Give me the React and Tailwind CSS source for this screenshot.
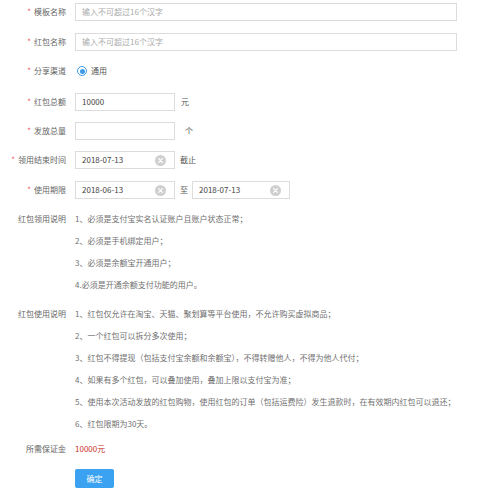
import React from "react";

const font = { fontFamily: '"Noto Sans CJK SC", "Noto Sans", sans-serif' };

function Label({ text, required }) {
  return (
    <div className="w-[66px] shrink-0 flex justify-end items-center text-[8px] text-[#666] whitespace-nowrap">
      {required && <span className="text-[#f05a5a] mr-[3px] text-[8px]">*</span>}
      {text}
    </div>
  );
}

function ClearIcon() {
  return (
    <svg width="11" height="11" viewBox="0 0 12 12" className="shrink-0">
      <circle cx="6" cy="6" r="6" fill="#cfcfcf" />
      <path d="M4 4 L8 8 M8 4 L4 8" stroke="#fff" strokeWidth="1.3" strokeLinecap="round" />
    </svg>
  );
}

function Box({ w, value, placeholder, clear }) {
  return (
    <div
      className={`${w} h-[18px] border border-[#dcdcdc] bg-white flex items-center justify-between pl-[6px] pr-[8px] text-[8px]`}
    >
      {value ? (
        <span className="text-[#444]">{value}</span>
      ) : (
        <span className="text-[#aaa]">{placeholder}</span>
      )}
      {clear && <ClearIcon />}
    </div>
  );
}

function Row({ label, required, className, children }) {
  return (
    <div className={`flex items-center ${className}`}>
      <Label text={label} required={required} />
      <div className="ml-[9px] flex items-center text-[8px] text-[#555]">{children}</div>
    </div>
  );
}

function TextList({ label, lines, className }) {
  return (
    <div className={`flex ${className}`}>
      <div className="w-[66px] shrink-0 h-[22px] flex items-center justify-end text-[8px] text-[#666] whitespace-nowrap">
        {label}
      </div>
      <div className="ml-[9px] flex flex-col">
        {lines.map((l, i) => (
          <div key={i} className="h-[22px] flex items-center text-[8px] text-[#707070] whitespace-nowrap">
            {l}
          </div>
        ))}
      </div>
    </div>
  );
}

export default function App() {
  return (
    <div className="w-[500px] h-[498px] bg-white pt-[3px] overflow-hidden" style={font}>
      <Row label="模板名称" required>
        <Box w="w-[382px]" placeholder="输入不可超过16个汉字" />
      </Row>
      <Row label="红包名称" required className="mt-[12px]">
        <Box w="w-[382px]" placeholder="输入不可超过16个汉字" />
      </Row>
      <Row label="分享渠道" required className="mt-[12px] h-[16px]">
        <span className="w-[10px] h-[10px] rounded-full border border-[#3d9be9] flex items-center justify-center ml-[2px]">
          <span className="w-[5px] h-[5px] rounded-full bg-[#3d9be9]" />
        </span>
        <span className="ml-[4px] text-[#555]">通用</span>
      </Row>
      <Row label="红包总额" required className="mt-[14px]">
        <Box w="w-[100px]" value="10000" />
        <span className="ml-[6px]">元</span>
      </Row>
      <Row label="发放总量" required className="mt-[11px]">
        <Box w="w-[100px]" />
        <span className="ml-[10px]">个</span>
      </Row>
      <Row label="领用结束时间" required className="mt-[11px]">
        <Box w="w-[100px]" value="2018-07-13" clear />
        <span className="ml-[5px]">截止</span>
      </Row>
      <Row label="使用期限" required className="mt-[12px]">
        <Box w="w-[100px]" value="2018-06-13" clear />
        <span className="ml-[5px] mr-[4px]">至</span>
        <Box w="w-[98px]" value="2018-07-13" clear />
      </Row>
      <TextList
        className="mt-[9px]"
        label="红包领用说明"
        lines={[
          "1、必须是支付宝实名认证账户且账户状态正常；",
          "2、必须是手机绑定用户；",
          "3、必须是余额宝开通用户；",
          "4.必须是开通余额支付功能的用户。",
        ]}
      />
      <TextList
        className="mt-[7px]"
        label="红包使用说明"
        lines={[
          "1、红包仅允许在淘宝、天猫、聚划算等平台使用，不允许购买虚拟商品；",
          "2、一个红包可以拆分多次使用；",
          "3、红包不得提现（包括支付宝余额和余额宝），不得转赠他人，不得为他人代付；",
          "4、如果有多个红包，可以叠加使用，叠加上限以支付宝为准；",
          "5、使用本次活动发放的红包购物，使用红包的订单（包括运费险）发生退款时，在有效期内红包可以退还；",
          "6、红包限期为30天。",
        ]}
      />
      <div className="flex mt-[3px] h-[22px] items-center">
        <div className="w-[66px] shrink-0 flex justify-end text-[8px] text-[#666]">所需保证金</div>
        <div className="ml-[9px] text-[8px] text-[#c9302c]">10000元</div>
      </div>
      <div className="ml-[75px] mt-[9px] w-[39px] h-[19px] rounded-[2px] bg-[#3ba2f2] flex items-center justify-center text-[8px] text-white">
        确定
      </div>
    </div>
  );
}
